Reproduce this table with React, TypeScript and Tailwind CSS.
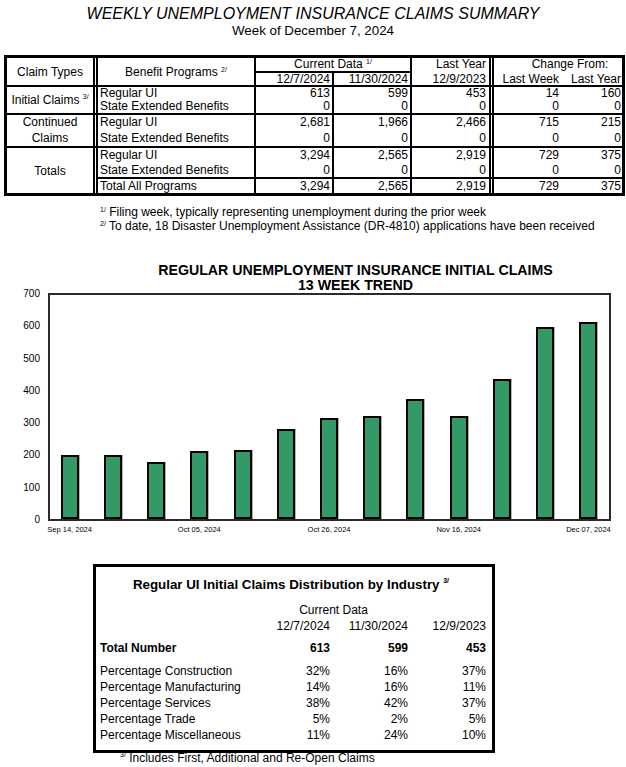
import React from "react";

const bars = [200, 200, 181, 214, 218, 283, 317, 322, 375, 322, 437, 599, 613];
const xLabels: Record<number, string> = {
  0: "Sep 14, 2024",
  3: "Oct 05, 2024",
  6: "Oct 26, 2024",
  9: "Nov 16, 2024",
  12: "Dec 07, 2024",
};
const yLabels = ["700", "600", "500", "400", "300", "200", "100", "0"];

function DataRow({
  label,
  v,
  className,
}: {
  label: string;
  v: string[];
  className: string;
}) {
  return (
    <div className={"flex " + className}>
      <div className="w-[158px] border-r-2 border-black pl-[2px] whitespace-nowrap">{label}</div>
      <div className="w-[78px] border-r-2 border-black pr-[2px] text-right">{v[0]}</div>
      <div className="w-[78px] border-r-2 border-black pr-[2px] text-right">{v[1]}</div>
      <div className="w-[82px] border-r-[5px] border-double border-black pr-[3px] text-right">{v[2]}</div>
      <div className="w-[66px] pr-[1px] text-right">{v[3]}</div>
      <div className="flex-1 pr-[1px] text-right">{v[4]}</div>
    </div>
  );
}

const zeros = ["0", "0", "0", "0", "0"];

const industry = [
  ["Percentage Construction", "32%", "16%", "37%"],
  ["Percentage Manufacturing", "14%", "16%", "11%"],
  ["Percentage Services", "38%", "42%", "37%"],
  ["Percentage Trade", "5%", "2%", "5%"],
  ["Percentage Miscellaneous", "11%", "24%", "10%"],
];

export default function App() {
  return (
    <div className="w-[626px] h-[767px] overflow-hidden bg-white text-black font-['Liberation_Sans',Arial,sans-serif]">
      {/* Header */}
      <div className="pt-[4.5px] text-center italic text-[16px] leading-[18px]">
        WEEKLY UNEMPLOYMENT INSURANCE CLAIMS SUMMARY
      </div>
      <div className="text-center text-[13.33px] leading-[16px]">Week of December 7, 2024</div>

      {/* Summary table */}
      <div className="mt-[16.5px] ml-[4px] w-[621px] border-[3px] border-black text-[12px]">
        {/* header */}
        <div className="flex border-b-2 border-black">
          <div className="w-[91px] border-r-[5px] border-double border-black flex items-center justify-center leading-[14px]">
            Claim Types
          </div>
          <div className="w-[158px] border-r-2 border-black flex items-center justify-center leading-[14px]">
            <span>
              Benefit Programs <sup className="text-[7px] top-[-4px]">2/</sup>
            </span>
          </div>
          <div className="w-[156px] border-r-2 border-black flex flex-col">
            <div className="h-[15px] border-b-2 border-black leading-[13px] text-center">
              Current Data <sup className="text-[7px] top-[-4px]">1/</sup>
            </div>
            <div className="flex leading-[12px]">
              <div className="w-[78px] border-r-2 border-black pr-[2px] text-right">12/7/2024</div>
              <div className="flex-1 pr-[2px] text-right">11/30/2024</div>
            </div>
          </div>
          <div className="w-[82px] border-r-[5px] border-double border-black flex flex-col text-right pr-[3px]">
            <div className="h-[15px] leading-[13px]">Last Year</div>
            <div className="leading-[12px]">12/9/2023</div>
          </div>
          <div className="flex-1 flex flex-col">
            <div className="h-[15px] leading-[13px] text-center pl-[24px]">Change From:</div>
            <div className="flex leading-[12px]">
              <div className="w-[66px] pr-[1px] text-right">Last Week</div>
              <div className="flex-1 pr-[1px] text-right">Last Year</div>
            </div>
          </div>
        </div>

        {/* Initial claims */}
        <div className="flex border-b-2 border-black">
          <div className="w-[91px] border-r-[5px] border-double border-black flex items-center justify-center leading-[14px] whitespace-nowrap">
            <span>
              Initial Claims <sup className="text-[7px] top-[-5px]">3/</sup>
            </span>
          </div>
          <div className="flex-1 flex flex-col">
            <DataRow className="leading-[13px]" label="Regular UI" v={["613", "599", "453", "14", "160"]} />
            <DataRow className="leading-[13px]" label="State Extended Benefits" v={zeros} />
          </div>
        </div>

        {/* Continued claims */}
        <div className="flex border-b-2 border-black">
          <div className="w-[91px] border-r-[5px] border-double border-black flex flex-col items-center justify-center leading-[15.5px]">
            <div>Continued</div>
            <div>Claims</div>
          </div>
          <div className="flex-1 flex flex-col">
            <DataRow className="leading-[15.5px]" label="Regular UI" v={["2,681", "1,966", "2,466", "715", "215"]} />
            <DataRow className="leading-[15.5px]" label="State Extended Benefits" v={zeros} />
          </div>
        </div>

        {/* Totals */}
        <div className="flex">
          <div className="w-[91px] border-r-[5px] border-double border-black flex items-center justify-center leading-[14px]">
            Totals
          </div>
          <div className="flex-1 flex flex-col">
            <DataRow className="leading-[14.5px]" label="Regular UI" v={["3,294", "2,565", "2,919", "729", "375"]} />
            <DataRow className="leading-[14.5px]" label="State Extended Benefits" v={zeros} />
            <DataRow
              className="leading-[14px] border-t-2 border-black"
              label="Total All Programs"
              v={["3,294", "2,565", "2,919", "729", "375"]}
            />
          </div>
        </div>
      </div>

      {/* Footnotes */}
      <div className="mt-[9px] pl-[100px] text-[12px] leading-[14px]">
        <div>
          <sup className="text-[7px] top-[-4px]">1/</sup> Filing week, typically representing unemployment during the prior week
        </div>
        <div>
          <sup className="text-[7px] top-[-4px]">2/</sup> To date, 18 Disaster Unemployment Assistance (DR-4810) applications have been received
        </div>
      </div>

      {/* Chart title */}
      <div className="mt-[30px] pl-[85px] text-center font-bold text-[14.2px] leading-[14.5px]">
        <div>REGULAR UNEMPLOYMENT INSURANCE INITIAL CLAIMS</div>
        <div>13 WEEK TREND</div>
      </div>

      {/* Chart */}
      <div className="mt-[1px] flex">
        <div className="w-[40px] mt-[1px] h-[226px] flex flex-col justify-between text-[10px] leading-[10px]">
          {yLabels.map((l) => (
            <div key={l} className="h-0 flex items-center justify-end">
              {l}
            </div>
          ))}
        </div>
        <div className="ml-[8px] w-[563px] h-[228px] border-2 border-[#2b2b2b]">
          <div className="-ml-[2px] -mr-[1px] h-full flex items-end">
            {bars.map((v, i) => (
              <div key={i} className="flex-1 min-w-0 flex justify-center items-end h-full">
                <div
                  className="w-[18px] bg-[#339966] border-2 border-black shadow-[1px_0_0_#b0b0b0]"
                  style={{ height: `${(v * 226) / 700 - 1}px` }}
                />
              </div>
            ))}
          </div>
        </div>
      </div>
      <div className="mt-[4px] ml-[48px] w-[562px] flex text-[7.5px] leading-[9px]">
        {bars.map((_, i) => (
          <div key={i} className="flex-1 min-w-0 flex justify-center whitespace-nowrap">
            {xLabels[i] ?? ""}
          </div>
        ))}
      </div>

      {/* Industry box */}
      <div className="mt-[30px] ml-[93px] w-[402px] border-[3px] border-black pb-[7px]">
        <div className="mt-[10px] pr-[6px] text-center font-bold text-[13.33px] leading-[16px]">
          Regular UI Initial Claims Distribution by Industry <sup className="text-[7px] top-[-6px]">3/</sup>
        </div>
        <div className="text-[12px]">
          <div className="mt-[10px] grid grid-cols-[152px_156px_78px] pl-[4px] leading-[15px]">
            <div />
            <div className="text-center pl-[7px]">Current Data</div>
            <div />
          </div>
          <div className="mt-[1px] grid grid-cols-[152px_78px_78px_78px] pl-[4px] leading-[15px]">
            <div />
            <div className="text-right">12/7/2024</div>
            <div className="text-right">11/30/2024</div>
            <div className="text-right">12/9/2023</div>
          </div>
          <div className="mt-[7px] grid grid-cols-[152px_78px_78px_78px] pl-[4px] leading-[15px] font-bold">
            <div>Total Number</div>
            <div className="text-right">613</div>
            <div className="text-right">599</div>
            <div className="text-right">453</div>
          </div>
          <div className="mt-[7px]">
            {industry.map((r) => (
              <div key={r[0]} className="grid grid-cols-[152px_78px_78px_78px] pl-[4px] leading-[16px]">
                <div className="whitespace-nowrap">{r[0]}</div>
                <div className="text-right">{r[1]}</div>
                <div className="text-right">{r[2]}</div>
                <div className="text-right">{r[3]}</div>
              </div>
            ))}
          </div>
        </div>
      </div>
      <div className="pl-[120px] text-[12px] leading-[10px]">
        <sup className="text-[7px] top-[-5px]">3/</sup> Includes First, Additional and Re-Open Claims
      </div>
    </div>
  );
}
